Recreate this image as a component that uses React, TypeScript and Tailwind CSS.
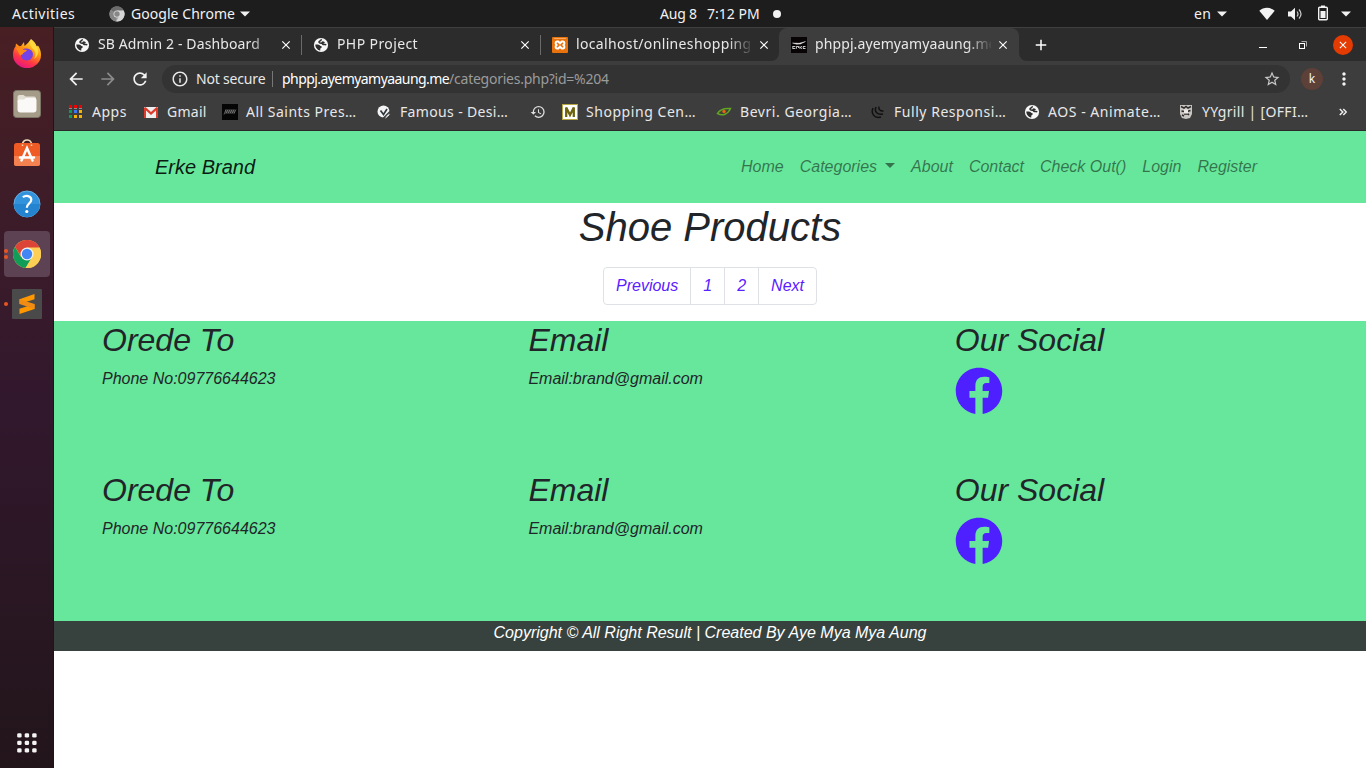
import React from "react";
import { FaFacebook } from "react-icons/fa";
import {
  MdAdd,
  MdArrowBack,
  MdArrowForward,
  MdClose,
  MdHistory,
  MdInfoOutline,
  MdMoreVert,
  MdRefresh,
  MdStarBorder,
} from "react-icons/md";

const Globe = () => (
  <svg viewBox="0 0 16 16" className="size-4 shrink-0">
    <circle cx="8" cy="8" r="7.100" fill="#f7f7f7" />
    <path d="M8.700 2.400c-.8.600-.9 1.300-1.800 1.600-.8.300-1 .9-.7 1.600.2.700 1.600.5 2.500.6.9.2.7 1.100 1.600 1.300.9.300 1.800-.1 3 .3" fill="none" stroke="#2e2e2e" strokeWidth="1.500" />
    <path d="M2.300 7.600c1.600-.2 3.900-.1 4.700.8.700.8 1.900.5 1.900 1.500 0 .9-1.400.8-1.500 1.700-.1.800-.2 1.400-.2 2.100-2.600-.4-4.900-2.900-4.900-6.100z" fill="#2e2e2e" />
    <path d="M9 4.300c1.300.2 2.500.2 2.900 1.400l-1.800 1.200-2-.7z" fill="#2e2e2e" />
  </svg>
);

const Xampp = () => (
  <svg viewBox="0 0 16 16" className="size-4 shrink-0">
    <rect width="16" height="16" rx="1" fill="#e8720c" />
    <path d="M2 1.500h12" stroke="#f7b77c" strokeWidth=".8" />
    <path d="M5 4.500h1.200L8 6.300l1.800-1.800H11a1.500 1.500 0 0 1 1.400 1.500c0 1-.5 1.700-.9 2 .4.300.9 1 .9 2a1.500 1.500 0 0 1-1.400 1.500H9.800L8 9.700l-1.800 1.800H5A1.500 1.500 0 0 1 3.600 10c0-1 .5-1.700.9-2-.4-.300-.9-1-.9-2A1.500 1.500 0 0 1 5 4.500z" fill="none" stroke="#fff" strokeWidth="2" />
  </svg>
);

const Erke = () => (
  <svg viewBox="0 0 16 16" className="size-4 shrink-0">
    <rect width="16" height="16" fill="#080405" />
    <path d="M1.500 6 8 6.300l6.500-1.800-5 2.500-4 .2z" fill="#f2f2f2" stroke="#eee" strokeWidth=".4" />
    <path d="M1.500 9.500h2.800M1.500 11.500h2.800M1.800 9.500v2M5.400 9.500h2.300M5.400 9.300v2.500M7.500 9.500v1.500M8.900 9.300v2.500M11 9.300 9.300 10.500l1.700 1.200M12 9.500h2.500M12 11.500h2.500M12.200 9.500v2" fill="none" stroke="#ddd" strokeWidth=".9" />
  </svg>
);

const AppsIcon = () => (
  <svg viewBox="0 0 16 16" className="size-4 shrink-0" shapeRendering="crispEdges">
    <path d="M1 2h3v2H1zM6 2h3v2H6zM11 2h3v2h-3zM1 1h3v1H1zM6 1h3v1H6zM11 1h3v1h-3z" fill="#f00000" />
    <path d="M1 6h3v3H1zM1 11h3v3H1z" fill="#0d9d58" />
    <path d="M6 6h3v3H6z" fill="#3b78f7" />
    <path d="M11 6h3v3h-3zM6 11h3v3H6zM11 11h3v3h-3z" fill="#f4b400" />
    <path d="M1 4h3v1H1zM6 4h3v1H6zM11 4h3v1h-3z" fill="#8d8d8d" />
  </svg>
);

const Gmail = () => (
  <svg viewBox="0 0 16 16" className="size-4 shrink-0">
    <rect x="1" y="3" width="14" height="11" rx="1" fill="#eee" />
    <path d="M1 14V4l1.500-1L8 8l5.500-5L15 4v10h-2V6.500L8 11 3 6.500V14z" fill="#dc3b2c" />
  </svg>
);

const Saints = () => (
  <svg viewBox="0 0 16 16" className="size-4 shrink-0">
    <rect width="16" height="16" fill="#050505" />
    <path d="m2 10.500 2-5v4l2-4v4l2-4v4l2-4v4l2-4v4l2-4" fill="none" stroke="#999" strokeWidth=".6" />
  </svg>
);

const Famous = () => (
  <svg viewBox="0 0 16 16" className="size-4 shrink-0">
    <circle cx="7.500" cy="7.500" r="6" fill="#f4f4f4" />
    <path d="m4.500 6.500 3 4 3.500-5.500" fill="none" stroke="#30363d" strokeWidth="1.700" />
    <path d="m7.500 14 6.500-6.500" fill="none" stroke="#3d3d3d" strokeWidth="1.500" />
    <path d="m9.500 14 4-3.500" fill="none" stroke="#f4f4f4" strokeWidth="1" />
  </svg>
);

const MIcon = () => (
  <svg viewBox="0 0 16 16" className="size-4 shrink-0">
    <rect width="16" height="16" fill="#b5a642" />
    <rect x="1" y="1" width="14" height="14" fill="#fff" />
    <path d="M4.200 13V3.500L8 11l3.800-7.500V13" fill="none" stroke="#6e6410" strokeWidth="2.300" />
  </svg>
);

const Bevri = () => (
  <svg viewBox="0 0 16 16" className="size-4 shrink-0">
    <path d="M1.500 9.500C4 5 9 4 14.500 4.500 12 10 7 12.500 1.500 9.500z" fill="none" stroke="#62a523" strokeWidth="1.500" />
    <circle cx="8" cy="7.500" r="1.700" fill="#e8660c" />
  </svg>
);

const Jquery = () => (
  <svg viewBox="0 0 16 16" className="size-4 shrink-0">
    <path d="M3 4C.8 9 4 15 11 13M6 3C4 7 7 11.500 13 10M9 2.500c-.800 3 1.500 5 4.500 4.500" fill="none" stroke="#111" strokeWidth="1.500" />
  </svg>
);

const YY = () => (
  <svg viewBox="0 0 16 16" className="size-4 shrink-0">
    <path d="M2 1h12v9l-2 4-4 1-4-1-2-4z" fill="#c9c5c2" />
    <path d="m3 2.500 3 1.500L8 2.500 10 4l3-1.500M3.500 7l2.500.5M9 7.500l3.500-1M6 10h4l1 1M4 11l2 1" stroke="#2e2b2b" strokeWidth="1.500" fill="none" />
    <path d="M6 5.500h4v4H6z" fill="#ece9e6" />
  </svg>
);

const Caret = () => (
  <svg viewBox="0 0 10 6" className="h-1.5 w-2.5 shrink-0">
    <path d="M0 .5h10L5 5.500z" fill="#f2f2f2" />
  </svg>
);

const ChromeGray = () => (
  <svg viewBox="0 0 16 16" className="size-4 shrink-0">
    <circle cx="8" cy="8" r="7.500" fill="#a5a5a5" />
    <path d="M8 8 1.500 4A7.500 7.500 0 0 1 14.500 4z" fill="#6c6c6c" />
    <path d="M8 8 1.500 4a7.500 7.500 0 0 0 5.500 11.400z" fill="#858585" />
    <path d="M8 4.500h6.700a7.500 7.500 0 0 1-7.500 11l3.300-6z" fill="#d5d5d5" />
    <circle cx="8" cy="8" r="3.500" fill="#ddd" />
    <circle cx="8" cy="8" r="2.700" fill="#888" />
  </svg>
);

const Firefox = () => (
  <svg viewBox="0 0 28 29" className="h-[29px] w-7">
    <defs>
      <linearGradient id="fx" x1=".8" y1="0" x2=".3" y2="1">
        <stop offset="0" stopColor="#fff44f" />
        <stop offset=".4" stopColor="#ff980e" />
        <stop offset=".72" stopColor="#ff3647" />
        <stop offset="1" stopColor="#e31587" />
      </linearGradient>
    </defs>
    <path d="M18 0c3 2 5 5 5.600 7.500 1-.5 1.400-1 1.400-1 2 3 3 6 3 9.500A14 13.200 0 0 1 0 16C0 12 1 9.500 2.500 7.500L3 4.500l3.500 2.800L8 7l3-4 .5 4C14 5 16 3 18 0z" fill="url(#fx)" />
    <path d="M9 11c3-2.500 9-1.500 10.500 2 1.500 4-1 8.500-5.500 8.500S7.500 18 8 15l2-1z" fill="#7542e5" />
    <path d="M3 9c3-1.500 6 0 7 1.500l4 .5c-1 2.500-4 2-4 4l-3 1.500z" fill="#ff8a16" />
    <path d="M18 1c-2 4 0 7 3 10 2 3 2 6 0 9 5-3 5-9 2.500-13C21.500 4 19 3 18 1z" fill="#ffd83d" />
  </svg>
);

const Files = () => (
  <svg viewBox="0 0 28 28" className="size-7">
    <rect x=".5" y=".5" width="27" height="27" rx="3" fill="#a49b88" stroke="#7d7566" />
    <path d="M4.500 7q0-2 2-2h4l2 1.500h8.500q2 0 2 2V12h-18.500z" fill="#e4dfd5" />
    <path d="M4.500 11.500q0-2 2-2h4.500l2-1.500h8.500q2 0 2 2v9.500q0 3-3 3h-13q-3 0-3-3z" fill="#faf9f7" />
  </svg>
);

const Software = () => (
  <svg viewBox="0 0 28 28" className="size-7">
    <path d="M9.500 5.500c0-6 9-6 9 0" fill="none" stroke="#ecd9b8" strokeWidth="1.700" />
    <rect x="1" y="4" width="26" height="23" rx="2.500" fill="#ee5b25" />
    <path d="M1 17h26v7.500a2.500 2.500 0 0 1-2.500 2.500h-21A2.500 2.500 0 0 1 1 24.500z" fill="#f4814f" />
    <path d="M9.500 5.500V7M18.500 5.500V7" fill="none" stroke="#ecd9b8" strokeWidth="1.500" />
    <path d="M8.500 21.500 14 9l5.500 12.500M7 18.500h14" fill="none" stroke="#fff" strokeWidth="2.500" strokeLinecap="round" />
  </svg>
);

const Help = () => (
  <svg viewBox="0 0 28 28" className="size-7">
    <circle cx="14" cy="14" r="13" fill="#3292dc" stroke="#64b0e8" />
    <path d="M1 14a13 13 0 0 0 26 0z" fill="#2584cf" />
    <path d="M9.800 7.200c3-2.200 8.500-1.700 8.500 2.600 0 3.600-4.500 3.600-4.500 8" fill="none" stroke="#fff" strokeWidth="2.200" />
    <circle cx="13.800" cy="21.500" r="1.600" fill="#fff" />
  </svg>
);

const Chrome = () => (
  <svg viewBox="0 0 28 28" className="size-7">
    <circle cx="14" cy="14" r="14" fill="#fdd055" />
    <path d="M14 14 2 6.800a14 14 0 0 1 24.200.200z" fill="#db4437" />
    <path d="M14 7.700H26.400l-.3-1H14z" fill="#db4437" />
    <path d="M2 6.800A14 14 0 0 0 12.500 28l6.500-11-11 0z" fill="#0f9d58" />
    <path d="M14 7.500h12.400A14 14 0 0 1 12.600 28l7-11z" fill="#fdd055" />
    <path d="M2 6.800 8.500 17 14 8z" fill="#db4437" />
    <circle cx="14" cy="14" r="6.500" fill="#f3f3f3" />
    <circle cx="14" cy="14" r="5.200" fill="#4285f4" />
  </svg>
);

const Sublime = () => (
  <svg viewBox="0 0 30 30" className="size-[30px]">
    <rect width="30" height="30" rx="1" fill="#4a4a4a" />
    <path d="M7.500 10.200 22.500 5v5.300L7.500 15z" fill="#ff9800" />
    <path d="M7.500 19.800 22.500 15v5L7.500 25z" fill="#ff9800" />
    <path d="m7.500 10.200 15 4.800v5l-15-5z" fill="#f08c14" />
  </svg>
);

function TopBar() {
  return (
    <header className="flex h-[27px] items-center bg-[#1d1d1d] pl-3 text-[14px] text-[#f2f2f2]">
      <span className="w-[97px] tracking-[0.5px]">Activities</span>
      <ChromeGray />
      <span className="ml-[6px] w-[109px] whitespace-nowrap tracking-[0.05px]">Google Chrome</span>
      <Caret />
      <div className="ml-[410px] flex w-[113px] items-center pb-px">
        <span className="w-[47px] whitespace-nowrap tracking-[-0.2px]">Aug 8</span>
        <span className="whitespace-nowrap">7:12 PM</span>
      </div>
      <span className="size-2 rounded-full bg-[#f2f2f2]" />
      <span className="ml-[413px] w-[23px] tracking-[0.3px]">en</span>
      <Caret />
      <svg viewBox="0 0 16 13" className="ml-[32px] h-[13px] w-4"><path d="M8 13 .3 3.800C4.500-.2 11.500-.2 15.700 3.800z" fill="#f2f2f2" /></svg>
      <svg viewBox="0 0 16 14" className="ml-3 h-3.5 w-4">
        <path d="M1 4.500h3L8 .8v12.400L4 9.500H1z" fill="#f2f2f2" />
        <path d="M10 4.500q2 2.500 0 5M12 2.500q4 4.500 0 9" fill="none" stroke="#ccc" strokeWidth="1.200" />
      </svg>
      <svg viewBox="0 0 12 16" className="mb-px ml-[14px] h-4 w-3">
        <path d="M4 .5h4v2H4z" fill="#f2f2f2" />
        <rect x="1.700" y="2.200" width="8.600" height="12.600" rx="1" fill="none" stroke="#f2f2f2" strokeWidth="1.400" />
        <path d="M3.500 6h5v7h-5z" fill="#f2f2f2" />
      </svg>
      <span className="ml-[12px] flex"><Caret /></span>
    </header>
  );
}

function Dock() {
  return (
    <aside className="flex w-[54px] shrink-0 flex-col items-center border-r border-[#1f1518] bg-linear-to-b from-[#481f23] via-[#32182d] to-[#22151a]">
      <div className="flex h-[53px] w-full items-center justify-center"><Firefox /></div>
      <div className="flex h-[48px] w-full items-center justify-center"><Files /></div>
      <div className="flex h-[49px] w-full items-center justify-center"><Software /></div>
      <div className="flex h-[54px] w-full items-center justify-center pb-px"><Help /></div>
      <div className="flex h-[46px] w-full items-center">
        <div className="ml-1 flex h-[46px] w-[46px] items-center rounded-[4px] bg-[#5c4253]">
          <div className="flex w-[9px] flex-col gap-[2px]">
            <span className="size-1 rounded-full bg-[#e95420]" />
            <span className="size-1 rounded-full bg-[#e95420]" />
          </div>
          <Chrome />
        </div>
      </div>
      <div className="mt-[12px] flex h-[30px] w-full items-center pl-1">
        <span className="mr-1 size-1 rounded-full bg-[#e95420]" />
        <Sublime />
      </div>
      <svg viewBox="0 0 20 20" className="mt-auto mb-[15px] ml-px size-5">
        {[0, 7.5, 15].map((y) => [0, 7.5, 15].map((x) => (
          <rect key={`${x}-${y}`} x={x + 0.2} y={y + 0.2} width="4.400" height="4.400" rx="1.400" fill="#f4f4f4" />
        )))}
      </svg>
    </aside>
  );
}

function Tab({ icon, title, active, divider, track }: { icon: React.ReactNode; title: string; active?: boolean; divider?: boolean; track: string }) {
  return (
    <div className={active ? "flex h-[34px] w-60 items-center rounded-t-lg bg-[#3d3d3d] pl-3" : "flex h-[34px] w-[239px] items-center pl-3"}>
      {icon}
      <span className={`ml-2 w-[176px] overflow-hidden pb-[2px] whitespace-nowrap [mask-image:linear-gradient(to_right,#000_152px,transparent_178px)] ${track}`}>{title}</span>
      <MdClose className="ml-[5px] size-[14px] shrink-0 text-white" />
      {divider && <span className="mr-[-1px] ml-auto h-5 w-px bg-[#6a6a6a]" />}
    </div>
  );
}

function TabStrip() {
  return (
    <div className="flex h-[34px] items-center border-t border-[#404040] bg-[#2c2c2c] text-[14px] text-[#e8e8e8]">
      <div className="flex h-full w-[725px] items-center bg-[#3d3d3d]">
        <div className="flex h-full w-full items-center rounded-br-lg bg-[#2c2c2c] pl-2">
          <Tab icon={<Globe />} title="SB Admin 2 - Dashboard" divider track="tracking-[0.120px]" />
          <Tab icon={<Globe />} title="PHP Project" divider track="tracking-[0.400px]" />
          <Tab icon={<Xampp />} title="localhost/onlineshopping" track="tracking-[0.350px]" />
        </div>
      </div>
      <Tab icon={<Erke />} title="phppj.ayemyamyaaung.me" active track="tracking-[0.100px]" />
      <div className="flex h-full flex-1 items-center bg-[#3d3d3d]">
        <div className="flex h-full w-full items-center rounded-bl-lg bg-[#2c2c2c]">
          <MdAdd className="ml-[13px] size-[18px] text-white" />
          <svg viewBox="0 0 8 8" className="ml-[209px] size-2"><path d="M0 6.500h8" stroke="#fff" /></svg>
          <svg viewBox="0 0 8 8" className="ml-8 size-2">
            <path d="M2.500.5h5v5" fill="none" stroke="#aaa" />
            <rect x=".5" y="2.500" width="5" height="5" fill="none" stroke="#fff" />
          </svg>
          <span className="ml-[26px] flex size-5 items-center justify-center rounded-full bg-[#e33b02]">
            <MdClose className="size-3 text-white" />
          </span>
        </div>
      </div>
    </div>
  );
}

function Toolbar() {
  return (
    <div className="flex h-9 items-center bg-[#3d3d3d] pl-[12px] text-[14px]">
      <MdArrowBack className="size-5 text-[#f2f2f2]" />
      <MdArrowForward className="ml-[12px] size-5 text-[#8c8c8c]" />
      <MdRefresh className="ml-[12px] size-5 text-[#f2f2f2]" />
      <div className="ml-[12px] flex h-7 w-[1128px] items-center rounded-full bg-[#333333] pl-[9px]">
        <MdInfoOutline className="size-[18px] text-[#e8e8e8]" />
        <span className="ml-[7px] w-[76px] pb-px whitespace-nowrap text-[#e8e8e8] tracking-[-0.180px]">Not secure</span>
        <span className="mr-[9px] h-4 w-px bg-[#777]" />
        <span className="pb-px whitespace-nowrap text-[#9b9b9b]"><span className="tracking-[-0.560px] text-white">phppj.ayemyamyaaung.me</span><span className="tracking-[-0.250px]">/categories.php?id=%204</span></span>
        <MdStarBorder className="mr-[9px] ml-auto size-[18px] text-[#c8c8c8]" />
      </div>
      <span className="ml-[11px] flex size-[22px] items-center justify-center rounded-full bg-[#5d4037] text-[12px] text-[#f2f2f2]">k</span>
      <MdMoreVert className="ml-[11px] size-5 text-[#f2f2f2]" />
    </div>
  );
}

const bookmarks = [
  { icon: <AppsIcon />, text: "Apps", width: "w-[75px]", track: "tracking-[0.500px]" },
  { icon: <Gmail />, text: "Gmail", width: "w-[79px]", track: "tracking-[0.250px]" },
  { icon: <Saints />, text: "All Saints Pres…", width: "w-[154px]", track: "tracking-[0.500px]" },
  { icon: <Famous />, text: "Famous - Desi…", width: "w-[154px]", track: "tracking-[0.350px]" },
  { icon: <MdHistory className="size-4 shrink-0 text-[#e0e0e0]" />, text: "", width: "w-[32px]", track: "tracking-normal" },
  { icon: <MIcon />, text: "Shopping Cen…", width: "w-[154px]", track: "tracking-[0.550px]" },
  { icon: <Bevri />, text: "Bevri. Georgia…", width: "w-[154px]", track: "tracking-[0.540px]" },
  { icon: <Jquery />, text: "Fully Responsi…", width: "w-[154px]", track: "tracking-[0.540px]" },
  { icon: <Globe />, text: "AOS - Animate…", width: "w-[154px]", track: "tracking-[0.550px]" },
  { icon: <YY />, text: "YYgrill | [OFFI…", width: "w-[154px]", track: "tracking-[0.320px]" },
];

function Bookmarks() {
  return (
    <div className="flex h-[34px] items-center border-b border-[#2a2a2a] bg-[#3d3d3d] pb-[3px] pl-[14px] text-[14px] text-[#e8e8e8]">
      {bookmarks.map((b, i) => (
        <div key={i} className={`flex shrink-0 items-center gap-2 ${b.width}`}>
          {b.icon}
          <span className={`pb-[2px] whitespace-nowrap ${b.track}`}>{b.text}</span>
        </div>
      ))}
      <svg viewBox="0 0 8 8" className="ml-[7px] size-2"><path d="m.8 1 3 3-3 3M4.300 1l3 3-3 3" fill="none" stroke="#eee" strokeWidth="1.500" /></svg>
    </div>
  );
}

function Navbar() {
  return (
    <nav className="flex h-[72px] items-center justify-between bg-[#67e79b] pr-[109px] pl-[101px]">
      <a className="text-[20px] text-black/90">Erke Brand</a>
      <ul className="flex gap-4 text-black/50">
        <li>Home</li>
        <li className="flex items-center">
          Categories
          <span className="mb-[3px] ml-2 border-x-[5px] border-t-[5px] border-x-transparent border-t-black/50" />
        </li>
        <li>About</li>
        <li>Contact</li>
        <li>Check Out()</li>
        <li>Login</li>
        <li>Register</li>
      </ul>
    </nav>
  );
}

function ContactRow() {
  return (
    <div className="mx-4 grid h-[150px] grid-cols-[426.400px_426.400px_1fr]">
      <div className="px-8">
        <h2 className="mb-2 text-[32px] leading-[38px]">Orede To</h2>
        <p>Phone No:09776644623</p>
      </div>
      <div className="px-8">
        <h2 className="mb-2 text-[32px] leading-[38px]">Email</h2>
        <p>Email:brand@gmail.com</p>
      </div>
      <div className="px-8">
        <h2 className="mb-2 text-[32px] leading-[38px]">Our Social</h2>
        <FaFacebook className="size-12 text-[#4f20ff]" />
      </div>
    </div>
  );
}

function WebPage() {
  return (
    <main className="flex-1 bg-white font-['Liberation_Sans',sans-serif] text-[16px] leading-6 text-[#212529] italic">
      <Navbar />
      <h1 className="text-center text-[40px] leading-[48px]">Shoe Products</h1>
      <div className="mt-4 mb-4 flex justify-center">
        <ul className="flex h-[38px] divide-x divide-[#dee2e6] rounded border border-[#dee2e6] text-[#5b20ff]">
          <li className="px-3 py-[6px]">Previous</li>
          <li className="px-3 py-[6px]">1</li>
          <li className="px-3 py-[6px]">2</li>
          <li className="px-3 py-[6px]">Next</li>
        </ul>
      </div>
      <section className="bg-[#67e79b]">
        <ContactRow />
        <ContactRow />
      </section>
      <footer className="h-[30px] bg-[#37423e] text-center text-white">Copyright © All Right Result | Created By Aye Mya Mya Aung</footer>
    </main>
  );
}

export default function App() {
  return (
    <div className="flex h-[768px] w-[1366px] flex-col overflow-hidden font-['Noto_Sans',sans-serif]">
      <TopBar />
      <div className="flex min-h-0 flex-1">
        <Dock />
        <div className="flex min-w-0 flex-1 flex-col">
          <TabStrip />
          <Toolbar />
          <Bookmarks />
          <WebPage />
        </div>
      </div>
    </div>
  );
}
